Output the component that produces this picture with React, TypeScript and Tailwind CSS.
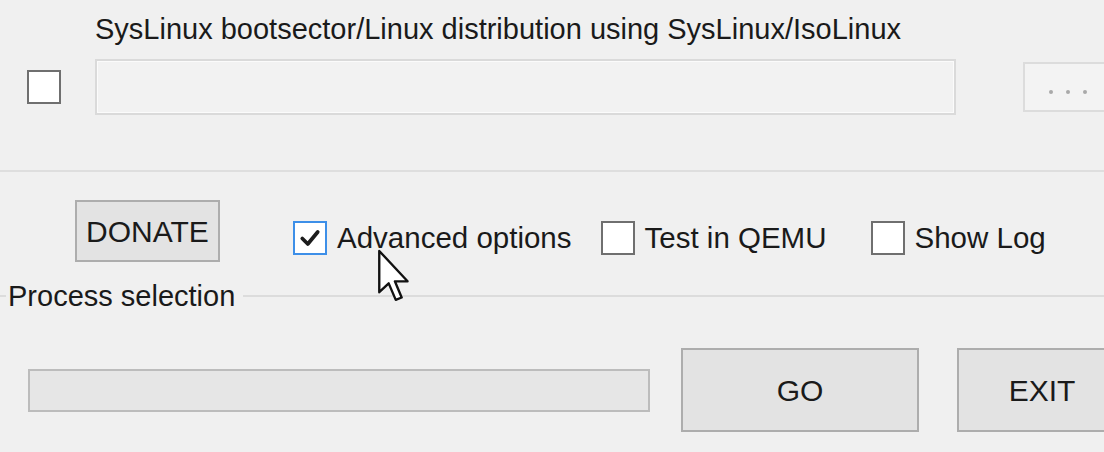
import React from "react";

const font = { fontFamily: '"Liberation Sans", Arial, sans-serif' };

function Box({ checked, focused }: { checked?: boolean; focused?: boolean }) {
  return (
    <span
      className={`grid size-[34px] shrink-0 place-items-center border-2 bg-white ${
        focused ? "border-[#3d8fe8]" : "border-[#6f6f6f]"
      }`}
    >
      {checked ? (
        <svg viewBox="0 0 20 20" className="size-[22px]">
          <path d="M3 10.5 L8 15.5 L17 4.5" fill="none" stroke="#1c1c1c" strokeWidth="3.4" strokeLinecap="round" strokeLinejoin="round" />
        </svg>
      ) : null}
    </span>
  );
}

function Check({ label, checked, focused, className }: { label: string; checked?: boolean; focused?: boolean; className?: string }) {
  return (
    <label className={`flex shrink-0 items-center gap-[10px] text-[29.5px] text-[#1a1a1a] ${className ?? ""}`}>
      <Box checked={checked} focused={focused} />
      <span>{label}</span>
    </label>
  );
}

export default function App() {
  return (
    <div style={font} className="relative h-[452px] w-[1104px] overflow-hidden bg-[#f0f0f0] text-[#1a1a1a]">
      <section className="h-[172px] border-b-2 border-[#dedede]">
        <p className="pl-[95px] pt-[11px] text-[29px] leading-[36px] text-[#1a1a1a] whitespace-nowrap">
          SysLinux bootsector/Linux distribution using SysLinux/IsoLinux
        </p>
        <div className="mt-[12px] flex items-start">
          <div className="ml-[27px] mt-[11px] shrink-0">
            <Box />
          </div>
          <div className="ml-[34px] h-[56px] w-[861px] shrink-0 border-2 border-[#dadada] bg-[#f2f2f2] shadow-[inset_0_0_0_1px_#fbfbfb]" />
          <button className="ml-[67px] mt-[3px] flex h-[50px] w-[90px] shrink-0 items-center justify-center gap-[13px] border-2 border-[#dcdcdc] bg-[#f3f3f3] pt-[10px]">
            <span className="size-[4px] rounded-full bg-[#a9a9a9]" />
            <span className="size-[4px] rounded-full bg-[#a9a9a9]" />
            <span className="size-[4px] rounded-full bg-[#a9a9a9]" />
          </button>
        </div>
      </section>

      <section className="flex items-center pt-[28px]">
        <button className="ml-[75px] h-[62px] w-[145px] shrink-0 border-2 border-[#adadad] bg-[#e3e3e3] text-[30px]">
          DONATE
        </button>
        <div className="ml-[73px] mt-[14px] flex items-center">
          <Check label="Advanced options" checked focused />
          <Check label="Test in QEMU" className="ml-[29px]" />
          <Check label="Show Log" className="ml-[44px]" />
        </div>
      </section>

      <section className="mt-[16px] flex items-center">
        <span className="h-[2px] w-[6px] bg-[#dcdcdc]" />
        <span className="ml-[2px] text-[29px] leading-[36px]">Process selection</span>
        <span className="ml-[8px] h-[2px] flex-1 bg-[#dcdcdc]" />
      </section>

      <section className="mt-[34px] flex items-center">
        <div className="ml-[28px] h-[43px] w-[622px] shrink-0 border-2 border-[#bcbcbc] bg-[#e6e6e6]" />
        <button className="ml-[31px] h-[84px] w-[238px] shrink-0 border-2 border-[#adadad] bg-[#e3e3e3] text-[30px]">
          GO
        </button>
        <button className="ml-[38px] h-[84px] w-[170px] shrink-0 border-2 border-[#adadad] bg-[#e3e3e3] text-[30px]">
          EXIT
        </button>
      </section>

      <svg className="absolute left-[376px] top-[248px]" width="36" height="56" viewBox="0 0 12 19">
        <path d="M1 1 L1 15 L4.2 12 L6.6 17.6 L8.6 16.8 L6.3 11.3 L10.6 11.3 Z" fill="#fff" stroke="#111" strokeWidth="0.8" strokeLinejoin="round" />
      </svg>
    </div>
  );
}
